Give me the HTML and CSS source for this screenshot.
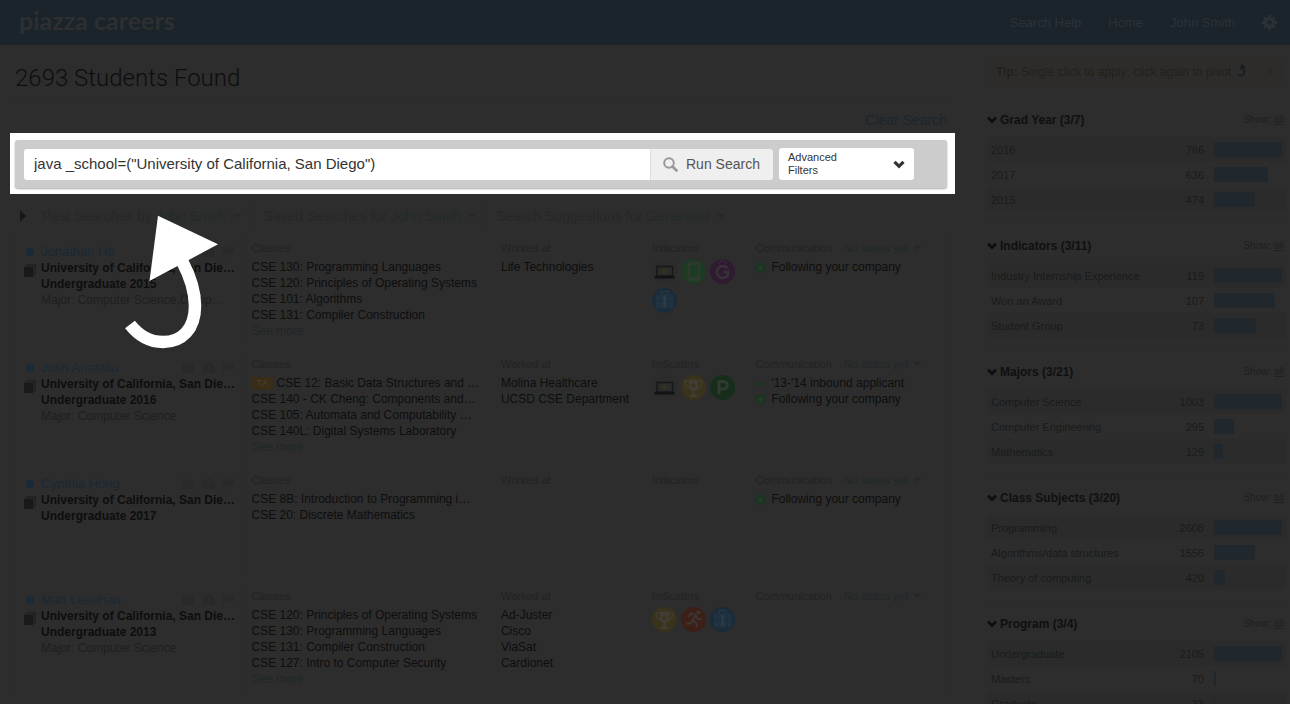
FILE: index.html
```html
<!DOCTYPE html>
<html lang="en">
<head>
<meta charset="utf-8">
<title>Piazza Careers</title>
<link rel="stylesheet" href="styles.css">
</head>
<body>
<svg class="defs" aria-hidden="true">
  <symbol id="chev" viewBox="0 0 10 8"><path d="M0 2.6 2 .7l3 2.9L8 .7l2 1.900-5 5z" fill="currentColor"/></symbol>
  <symbol id="caret" viewBox="0 0 8 4"><path d="M0 0h8L4 4z" fill="currentColor"/></symbol>
  <symbol id="book" viewBox="0 0 12 13"><path d="M1 2.500 3 .5h8.500v9.500l-2 2" fill="#232625" stroke="#1f2221"/><path d="M0 3h9v10H0z" fill="#171a19"/></symbol>
  <symbol id="tools" viewBox="0 0 54 14"><g fill="#292929"><path d="M1 2h4l1 1h7v9H1zM21 5l7-4 6 4v7H21z"/><path d="M42 2h2v11h-2zM44 2l4 1 5-1v6l-5 1-4-1z"/></g><path d="M1 5h12M25 5h5M27.500 3v5" stroke="#2d2d2d"/></symbol>
  <symbol id="laptop" viewBox="0 0 25 25"><circle cx="12.500" cy="12.500" r="12.500" fill="#2b2b2b"/><path d="M5 7.500h15.500V17H5z" fill="#2b2b2b" stroke="#151719" stroke-width="1.400"/><circle cx="12.500" cy="12" r="2.500" fill="#35301f"/><path d="M2.500 17H22.500v1.500q0 1-1 1h-18q-1 0-1-1z" fill="#111314"/></symbol>
  <symbol id="phone" viewBox="0 0 25 25"><circle cx="12.500" cy="12.500" r="12.500" fill="#1d3a22"/><rect x="7" y="3" width="12" height="19" rx="2" fill="#2e3a30"/><path d="M9 6h8v12H9z" fill="#1d3a22"/></symbol>
  <symbol id="gee" viewBox="0 0 25 25"><circle cx="12.500" cy="12.500" r="12.500" fill="#2e1b30"/><path d="M8 3.500h2l1-2h3l1 2h2" fill="none" stroke="#36263a" stroke-width="1.500"/><path d="M17.500 9.200A6 6 0 1 0 18 16v-3h-4.500" fill="none" stroke="#393039" stroke-width="2.600"/></symbol>
  <symbol id="case" viewBox="0 0 25 25"><circle cx="12.500" cy="12.500" r="12.500" fill="#1a2b3a"/><path d="M9 6V3.500h7V6" fill="none" stroke="#263642" stroke-width="1.500"/><rect x="4" y="6" width="17.500" height="14.500" rx="2" fill="#213341"/><path d="M4 13h17.500M8 6v14.500M17 6v14.500" stroke="#1a2b3a" stroke-width=".7"/><path d="M12.500 8v11" stroke="#333c42" stroke-width="2"/></symbol>
  <symbol id="cup" viewBox="0 0 25 25"><circle cx="12.500" cy="12.500" r="12.500" fill="#3a331c"/><path d="M8 4.500h9v6q0 5-3.500 5.500v3l3 1.500v1.500H8.500v-1.500l3-1.500v-3Q8 15.500 8 10.500z" fill="#413d34"/><path d="M8 6H4q0 6 5 7M17 6h4q0 6-5 7" fill="none" stroke="#413d34" stroke-width="1.500"/><path d="m12.500 7.500 1 2h2l-1.500 1.500.5 2-2-1-2 1 .5-2L9.500 9.500h2z" fill="#3a331c"/></symbol>
  <symbol id="pee" viewBox="0 0 25 25"><circle cx="12.500" cy="12.500" r="12.500" fill="#152d1a"/><path d="M9 19.500v-13h4.500a3.700 3.700 0 0 1 0 7.600H9" fill="none" stroke="#303a31" stroke-width="3"/></symbol>
  <symbol id="run" viewBox="0 0 25 25"><circle cx="12.500" cy="12.500" r="12.500" fill="#3c1f17"/><circle cx="17.500" cy="5.500" r="2" fill="#3e3532"/><path d="m7 10 3.500-3.500 4.500 1.500-3.500 5.500 4 2.500v4.500M15 8.500l2 4 4-.5M11.500 13.500 9 16.500H4.500" fill="none" stroke="#3e3532" stroke-width="2"/></symbol>
  <symbol id="plus" viewBox="0 0 11 11"><circle cx="5.500" cy="5.500" r="5.300" fill="#1a3520"/><path d="M5.500 3v5M3 5.500h5" stroke="#2d3b2f" stroke-width="1.700"/></symbol>
  <symbol id="share" viewBox="0 0 11 11"><path d="M.5 8Q1 4.500 6 4.200V2l4.500 3.800L6 9V7Q3 6.500.5 8z" fill="#1a3520"/></symbol>
</svg>

<header class="topbar">
  <a class="logo" href="#">piazza careers</a>
  <nav class="nav">
    <a href="#">Search Help</a><a href="#">Home</a><a href="#">John Smith</a>
    <a class="gear" href="#" aria-label="Settings"><svg viewBox="0 0 16 16" width="15" height="15"><g fill="currentColor"><path d="M6.500 0h3v16h-3zM0 6.500h16v3H0z"/><path d="M1.500 3.500 3.500 1.500l11 11-2 2zM12.500 1.500l2 2-11 11-2-2z"/><circle cx="8" cy="8" r="6"/></g><circle cx="8" cy="8" r="2.500" fill="#1c242b"/></svg></a>
  </nav>
</header>

<div class="page">
<main class="main">
  <h1 class="title">2693 Students Found</h1>
  <div class="clear"><a href="#">Clear Search</a></div>

  <div class="spotlight">
    <form class="search">
      <div class="query">
        <input class="query-input" type="text" aria-label="Search students" value='java _school=("University of California, San Diego")'>
        <button class="query-run" type="button"><svg viewBox="0 0 15 15" width="15" height="15"><circle cx="6" cy="6" r="4.800" fill="none" stroke="#999" stroke-width="2"/><path d="m9.500 9.500 4 4" stroke="#999" stroke-width="2.600" stroke-linecap="round"/></svg>Run Search</button>
      </div>
      <button class="advanced" type="button" aria-haspopup="listbox"><span>Advanced<br>Filters</span><svg width="12" height="9"><use href="#chev"/></svg></button>
    </form>
    <svg class="pointer" viewBox="0 0 94 134" width="94" height="134" aria-hidden="true"><path d="M33 .7 93 29.300 24.500 66z" fill="#fff"/><path d="M57 46C65 61 70 75 70 91c0 23-13 36-32 36-13 0-24-6-33-17.500" fill="none" stroke="#fff" stroke-width="12.500"/></svg>
  </div>

  <div class="saved">
    <svg class="saved-arrow" viewBox="0 0 6 12" width="6" height="12"><path d="M0 0l6 6-6 6z" fill="#161616"/></svg>
    <button type="button">Past Searches by <b>John Smith</b><svg width="8" height="4"><use href="#caret"/></svg></button>
    <button type="button">Saved Searches for <b>John Smith</b><svg width="8" height="4"><use href="#caret"/></svg></button>
    <button type="button">Search Suggestions for <b>Generalist</b><svg width="8" height="4"><use href="#caret"/></svg></button>
  </div>

  <article class="student">
    <div class="who">
      <div class="name"><i class="dot"></i><a href="#">Jonathan Ho</a><svg width="54" height="14"><use href="#tools"/></svg></div>
      <div class="school"><svg width="12" height="13"><use href="#book"/></svg><div><strong>University of California, San Die…</strong><strong>Undergraduate 2015</strong><p>Major: Computer Science,Comp…</p></div></div>
    </div>
    <section><h2>Classes</h2><ul><li>CSE 130: Programming Languages</li><li>CSE 120: Principles of Operating Systems</li><li>CSE 101: Algorithms</li><li>CSE 131: Compiler Construction</li></ul><a class="more" href="#">See more</a></section>
    <section><h2>Worked at</h2><ul><li>Life Technologies</li></ul></section>
    <section><h2>Indicators</h2><div class="badges"><svg><use href="#laptop"/></svg><svg><use href="#phone"/></svg><svg><use href="#gee"/></svg><svg><use href="#case"/></svg></div></section>
    <section><h2>Communication<button type="button">No status yet<svg width="8" height="4"><use href="#caret"/></svg></button></h2><ul class="comm"><li><svg><use href="#plus"/></svg>Following your company</li></ul></section>
  </article>

  <article class="student">
    <div class="who">
      <div class="name"><i class="dot"></i><a href="#">Josh Anatalio</a><svg width="54" height="14"><use href="#tools"/></svg></div>
      <div class="school"><svg width="12" height="13"><use href="#book"/></svg><div><strong>University of California, San Die…</strong><strong>Undergraduate 2016</strong><p>Major: Computer Science</p></div></div>
    </div>
    <section><h2>Classes</h2><ul><li><span class="ta">TA</span>CSE 12: Basic Data Structures and …</li><li>CSE 140 - CK Cheng: Components and…</li><li>CSE 105: Automata and Computability …</li><li>CSE 140L: Digital Systems Laboratory</li></ul><a class="more" href="#">See more</a></section>
    <section><h2>Worked at</h2><ul><li>Molina Healthcare</li><li>UCSD CSE Department</li></ul></section>
    <section><h2>Indicators</h2><div class="badges"><svg><use href="#laptop"/></svg><svg><use href="#cup"/></svg><svg><use href="#pee"/></svg></div></section>
    <section><h2>Communication<button type="button">No status yet<svg width="8" height="4"><use href="#caret"/></svg></button></h2><ul class="comm"><li><svg><use href="#share"/></svg>'13-'14 inbound applicant</li><li><svg><use href="#plus"/></svg>Following your company</li></ul></section>
  </article>

  <article class="student">
    <div class="who">
      <div class="name"><i class="dot"></i><a href="#">Cynthia Hong</a><svg width="54" height="14"><use href="#tools"/></svg></div>
      <div class="school"><svg width="12" height="13"><use href="#book"/></svg><div><strong>University of California, San Die…</strong><strong>Undergraduate 2017</strong></div></div>
    </div>
    <section><h2>Classes</h2><ul><li>CSE 8B: Introduction to Programming i…</li><li>CSE 20: Discrete Mathematics</li></ul></section>
    <section><h2>Worked at</h2></section>
    <section><h2>Indicators</h2></section>
    <section><h2>Communication<button type="button">No status yet<svg width="8" height="4"><use href="#caret"/></svg></button></h2><ul class="comm"><li><svg><use href="#plus"/></svg>Following your company</li></ul></section>
  </article>

  <article class="student">
    <div class="who">
      <div class="name"><i class="dot"></i><a href="#">Matt Lenehan</a><svg width="54" height="14"><use href="#tools"/></svg></div>
      <div class="school"><svg width="12" height="13"><use href="#book"/></svg><div><strong>University of California, San Die…</strong><strong>Undergraduate 2013</strong><p>Major: Computer Science</p></div></div>
    </div>
    <section><h2>Classes</h2><ul><li>CSE 120: Principles of Operating Systems</li><li>CSE 130: Programming Languages</li><li>CSE 131: Compiler Construction</li><li>CSE 127: Intro to Computer Security</li></ul><a class="more" href="#">See more</a></section>
    <section><h2>Worked at</h2><ul><li>Ad-Juster</li><li>Cisco</li><li>ViaSat</li><li>Cardionet</li></ul></section>
    <section><h2>Indicators</h2><div class="badges"><svg><use href="#cup"/></svg><svg><use href="#run"/></svg><svg><use href="#case"/></svg></div></section>
    <section><h2>Communication<button type="button">No status yet<svg width="8" height="4"><use href="#caret"/></svg></button></h2></section>
  </article>
</main>

<aside class="side">
  <div class="tip"><p><strong>Tip:</strong> Single click to apply; click again to pivot</p><svg viewBox="0 0 9 13" width="9" height="13"><path d="M4 0l5 3.500-6 2.500z" fill="#171c20"/><path d="M6 4q2 3 1 5.500-1.500 3-6 1.500" fill="none" stroke="#171c20" stroke-width="1.600"/></svg><button class="close" type="button" aria-label="Close tip">×</button></div>

  <section class="facet">
    <header><svg width="10" height="8"><use href="#chev"/></svg><h3>Grad Year (3/7)</h3><span>Show: <a href="#">all</a></span></header>
    <table><tr><td>2016</td><td>786</td><td><i style="width:100%"></i></td></tr><tr><td>2017</td><td>636</td><td><i style="width:80%"></i></td></tr><tr><td>2015</td><td>474</td><td><i style="width:60%"></i></td></tr></table>
  </section>
  <section class="facet">
    <header><svg width="10" height="8"><use href="#chev"/></svg><h3>Indicators (3/11)</h3><span>Show: <a href="#">all</a></span></header>
    <table><tr><td>Industry Internship Experience</td><td>119</td><td><i style="width:100%"></i></td></tr><tr><td>Won an Award</td><td>107</td><td><i style="width:90%"></i></td></tr><tr><td>Student Group</td><td>73</td><td><i style="width:62%"></i></td></tr></table>
  </section>
  <section class="facet">
    <header><svg width="10" height="8"><use href="#chev"/></svg><h3>Majors (3/21)</h3><span>Show: <a href="#">all</a></span></header>
    <table><tr><td>Computer Science</td><td>1003</td><td><i style="width:100%"></i></td></tr><tr><td>Computer Engineering</td><td>295</td><td><i style="width:29%"></i></td></tr><tr><td>Mathematics</td><td>129</td><td><i style="width:13%"></i></td></tr></table>
  </section>
  <section class="facet">
    <header><svg width="10" height="8"><use href="#chev"/></svg><h3>Class Subjects (3/20)</h3><span>Show: <a href="#">all</a></span></header>
    <table><tr><td>Programming</td><td>2608</td><td><i style="width:100%"></i></td></tr><tr><td>Algorithms/data structures</td><td>1556</td><td><i style="width:60%"></i></td></tr><tr><td>Theory of computing</td><td>420</td><td><i style="width:16%"></i></td></tr></table>
  </section>
  <section class="facet">
    <header><svg width="10" height="8"><use href="#chev"/></svg><h3>Program (3/4)</h3><span>Show: <a href="#">all</a></span></header>
    <table><tr><td>Undergraduate</td><td>2105</td><td><i style="width:100%"></i></td></tr><tr><td>Masters</td><td>70</td><td><i style="width:3%"></i></td></tr><tr><td>Graduate</td><td>33</td><td><i style="width:1%"></i></td></tr></table>
  </section>
</aside>
</div>
</body>
</html>
```

FILE: styles.css
```css
* { box-sizing: border-box; }
body {
  margin: 0;
  height: 100vh;
  overflow: hidden;
  background: #2d2d2d;
  color: #0e0e0e;
  font: 12px/16px "Liberation Sans", Arial, sans-serif;
}
h1, h2, h3, p, ul { margin: 0; padding: 0; font-weight: normal; }
ul { list-style: none; }
a { color: inherit; text-decoration: none; }
button { font: inherit; color: inherit; background: none; border: 0; padding: 0; }
svg { flex: none; }
.defs { display: none; }

.topbar {
  display: flex;
  justify-content: space-between;
  align-items: center;
  height: 45px;
  padding: 0 13px 0 19px;
  background: #1c242b;
  color: #2b3237;
}
.logo {
  padding-bottom: 6px;
  font: bold 25px/28px Lato, sans-serif;
  color: #2d2f30;
}
.nav { display: flex; align-items: center; gap: 27px; font-size: 13px; }
.nav svg { display: block; }

.page {
  display: grid;
  grid-template-columns: minmax(0, 1fr) 299px;
  column-gap: 32px;
  padding: 0 4px 0 10px;
}
.main { min-width: 0; }
.title {
  margin: 0 8px 0 5px;
  padding: 17px 0 5px;
  border-bottom: 1px solid #2a2a2a;
  font: 300 24px/32px Roboto, sans-serif;
}
.clear { padding: 11px 8px 4px; text-align: right; font-size: 14px; line-height: 18px; color: #1b262f; }

.spotlight { position: relative; padding: 7px 8px 6px 5px; background: #fff; }
.search {
  display: flex;
  align-items: center;
  gap: 6px;
  padding: 8px 33px 8px 9px;
  border-radius: 3px;
  background: #ccc;
  box-shadow: 0 1px 2px #aaa;
}
.query { display: flex; flex: 1; height: 31px; border-radius: 3px; overflow: hidden; }
.query-input {
  flex: 1;
  min-width: 0;
  padding: 0 10px;
  border: 0;
  background: #fff;
  color: #333;
  font: 15px/20px "Liberation Sans", Arial, sans-serif;
}
.query-run {
  display: flex;
  align-items: center;
  gap: 8px;
  width: 123px;
  padding-left: 12px;
  border-left: 1px solid #ddd;
  background: #efefef;
  color: #555;
  font-size: 14px;
  white-space: nowrap;
}
.advanced {
  display: flex;
  align-items: center;
  justify-content: space-between;
  width: 135px;
  height: 32px;
  padding: 0 9px;
  border-radius: 3px;
  background: #fff;
  color: #333;
  text-align: left;
  font-size: 11px;
  line-height: 13px;
}
.pointer { position: absolute; left: 115px; top: 82px; z-index: 2; }

.saved { display: flex; align-items: center; height: 38px; padding: 6px 10px 0; font-size: 14px; color: #252827; }
.saved-arrow { margin-right: 3px; }
.saved button { display: flex; align-items: center; white-space: pre; line-height: 24px; padding: 0 10px; }
.saved button + button { border-left: 1px solid #2b2b2b; }
.saved b { font-weight: normal; color: #232a2b; }
.saved svg + button { padding: 0 12px 0 13px; }
.saved button svg { margin-left: 7px; }

.student {
  display: grid;
  grid-template-columns: minmax(0, 236fr) minmax(0, 250fr) minmax(0, 151fr) minmax(0, 104fr) minmax(0, 191fr);
  min-height: 116px;
  margin: 0 8px 0 5px;
  padding-top: 8px;
  border: solid #2b2b2b;
  border-width: 0 1px 1px;
  border-bottom-color: #302d2b;
  white-space: nowrap;
}
.who { margin: -6px 10px 0 0; padding: 10px 5px 0 8px; border-right: 1px solid #2b2b2b; }
.name { display: flex; align-items: center; color: #1a2935; font-size: 13px; line-height: 16px; padding-left: 2px; }
.name svg { margin-left: auto; }
.dot { width: 8px; height: 8px; margin-right: 7px; border-radius: 50%; background: #192a38; }
.school { display: flex; gap: 5px; }
.school > svg { margin-top: 4px; }
.school strong { display: block; }
.school p { color: #1f1f1f; }
.student h2 { display: flex; gap: 12px; margin-bottom: 3px; font-size: 11px; line-height: 16px; color: #222; }
.student h2 button { display: flex; align-items: center; gap: 5px; color: #1f282a; }
.student li { height: 16px; }
.more { color: #202728; }
.ta { display: inline-block; width: 22px; height: 13px; margin: 2px 3px 0 0; border-radius: 2px; background: #3a2d17; color: #443a28; font: bold 9px/13px "Liberation Sans", Arial, sans-serif; text-align: center; vertical-align: top; }
.badges { display: flex; flex-wrap: wrap; gap: 4px; width: 90px; }
.badges svg { width: 25px; height: 25px; }
.comm li { display: flex; align-items: center; gap: 5px; }
.comm svg { width: 11px; height: 11px; }

.side { padding-top: 13px; color: #191b1b; font-size: 11px; }
.tip { display: flex; align-items: center; height: 28px; padding: 0 9px; margin: 0 2px 10px 0; border-radius: 3px; background: #2e2c2a; color: #23201a; font-size: 12px; white-space: nowrap; }
.tip svg { margin-left: 6px; margin-bottom: 4px; }
.close { margin-left: auto; color: #292724; font-size: 16px; }
.facet { padding: 13px 0 10px; border-top: 1px solid #2b2b2b; }
.tip + .facet { border-color: transparent; }
.facet header { display: flex; align-items: center; height: 20px; margin-bottom: 7px; padding: 0 2px 0 0; color: #1f2020; }
.facet h3 { margin-left: 3px; margin-right: auto; font-size: 12px; font-weight: bold; color: #101010; }
.facet header svg { color: #0e0e0e; }
.facet header span { font-size: 10px; }
.facet header a { text-decoration: underline; }
.facet table { width: 100%; border-collapse: collapse; table-layout: fixed; }
.facet td { height: 25px; padding: 0; white-space: nowrap; }
.facet td:first-child { padding-left: 4px; }
.facet td:nth-child(2) { width: 40px; text-align: right; }
.facet td:nth-child(3) { width: 82px; padding: 0 4px 0 10px; }
.facet tr:nth-child(odd) { background: #2b2b2b; }
.facet i { display: block; height: 15px; background: #20272d; }
```
